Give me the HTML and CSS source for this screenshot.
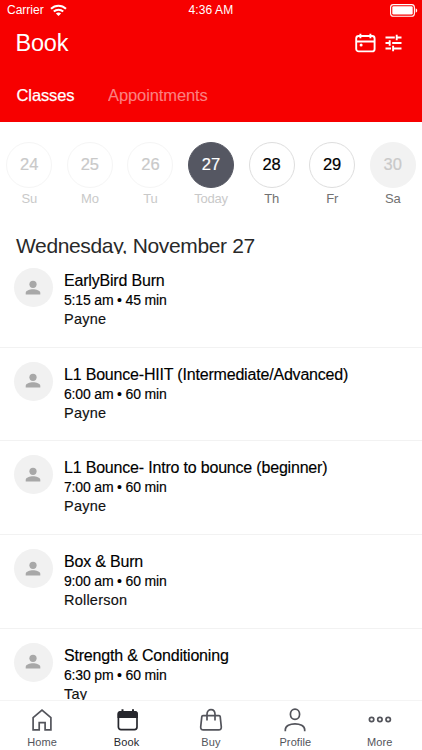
FILE: index.html
```
<!DOCTYPE html>
<html lang="en">
<head>
<meta charset="utf-8">
<meta name="viewport" content="width=device-width, initial-scale=1">
<title>Book</title>
<link rel="stylesheet" href="styles.css">
</head>
<body>
<svg class="symbols" aria-hidden="true">
  <symbol id="person" viewBox="0 0 16 16"><circle cx="8" cy="4.300" r="3.600"/><path d="M.7 14.600v-1.700C.7 10.500 4.800 9.300 8 9.300s7.300 1.200 7.300 3.600v1.700z"/></symbol>
</svg>
<div class="app">
  <header class="header">
    <div class="status">
      <span class="carrier">Carrier</span>
      <svg class="wifi" width="17" height="13" viewBox="0 0 17 13" fill="none" stroke="#fff" stroke-width="2"><path d="M1 4.700C5.200.6 11.800.6 16 4.700M3.800 7.500c2.700-2.500 6.700-2.500 9.400 0"/><path d="M8.500 12 5.900 9.500c1.500-1.300 3.700-1.300 5.200 0z" fill="#fff" stroke="none"/></svg>
      <span class="clock">4:36 AM</span>
      <svg class="battery" width="28" height="13" viewBox="0 0 28 13"><rect x=".6" y=".6" width="23.800" height="11.600" rx="2.800" fill="none" stroke="#fff" stroke-width="1.100"/><rect x="2.300" y="2.300" width="20.400" height="8.200" rx="1.200" fill="#fff"/><path d="M25.700 4.200c2 .8 2 3.700 0 4.500z" fill="#fff"/></svg>
    </div>
    <div class="titlebar">
      <h1 class="title">Book</h1>
      <svg class="cal" width="22" height="20" viewBox="0 0 22 20" fill="none" stroke="#fff" stroke-width="1.900"><rect x="1.200" y="3" width="18.400" height="15.400" rx="2.500"/><path d="M1.200 8.500h18.400M5.400.7v4.600M15.400.7v4.600"/><circle cx="6.100" cy="12" r="1.500" fill="#fff" stroke="none"/></svg>
      <svg class="tune" width="18" height="18" viewBox="0 0 18 18" fill="none" stroke="#fff" stroke-width="1.900"><path d="M.5 3.500h9.300M12 3.500h4.500M11.700.7v5.600M.5 9H5M7.200 9h9.300M4.700 6.200v5.600M.5 14.500H6M8.100 14.500h8.400M8.100 11.700v5.600"/></svg>
    </div>
    <nav class="tabs"><span class="tab-on">Classes</span><span class="tab-off">Appointments</span></nav>
  </header>
  <section class="days">
    <div class="day past"><span class="num">24</span><span class="name">Su</span></div>
    <div class="day past"><span class="num">25</span><span class="name">Mo</span></div>
    <div class="day past"><span class="num">26</span><span class="name">Tu</span></div>
    <div class="day today"><span class="num">27</span><span class="name">Today</span></div>
    <div class="day"><span class="num">28</span><span class="name">Th</span></div>
    <div class="day"><span class="num">29</span><span class="name">Fr</span></div>
    <div class="day closed"><span class="num">30</span><span class="name">Sa</span></div>
  </section>
  <h2 class="date">Wednesday, November 27</h2>
  <main class="list">
    <article class="row"><div class="avatar"><svg width="16" height="16"><use href="#person"/></svg></div><div class="info"><h3>EarlyBird Burn</h3><p class="time">5:15 am • 45 min</p><p class="who">Payne</p></div></article>
    <article class="row"><div class="avatar"><svg width="16" height="16"><use href="#person"/></svg></div><div class="info"><h3>L1 Bounce-HIIT (Intermediate/Advanced)</h3><p class="time">6:00 am • 60 min</p><p class="who">Payne</p></div></article>
    <article class="row"><div class="avatar"><svg width="16" height="16"><use href="#person"/></svg></div><div class="info"><h3>L1 Bounce- Intro to bounce (beginner)</h3><p class="time">7:00 am • 60 min</p><p class="who">Payne</p></div></article>
    <article class="row"><div class="avatar"><svg width="16" height="16"><use href="#person"/></svg></div><div class="info"><h3>Box &amp; Burn</h3><p class="time">9:00 am • 60 min</p><p class="who">Rollerson</p></div></article>
    <article class="row"><div class="avatar"><svg width="16" height="16"><use href="#person"/></svg></div><div class="info"><h3>Strength &amp; Conditioning</h3><p class="time">6:30 pm • 60 min</p><p class="who">Tay</p></div></article>
  </main>
  <nav class="bottom">
    <a class="item"><svg width="24" height="24" viewBox="0 0 24 24"><path d="M3.100 21.900V9.700L12 2l8.900 7.700v12.200h-5.800v-7.200H9.200v7.200z"/></svg><span>Home</span></a>
    <a class="item active"><svg width="24" height="24" viewBox="0 0 24 24"><rect x="3.400" y="4" width="18.600" height="17.600" rx="2.500"/><path class="solid" d="M2.500 10V5.500C2.500 4 3.500 3 5 3h1.500V1.300h2V3H17V1.300h2V3h1.400c1.500 0 2.500 1 2.500 2.500V10z"/></svg><span>Book</span></a>
    <a class="item"><svg width="24" height="24" viewBox="0 0 24 24"><path d="M4 7.700h16c.7 0 1.100.3 1.200 1l1.100 10.200c.2 1.800-.8 3-2.600 3H4.300c-1.800 0-2.800-1.200-2.600-3L2.800 8.700c.1-.7.500-1 1.200-1zM8 12.500V6.300c0-6.300 8-6.300 8 0v6.200"/></svg><span>Buy</span></a>
    <a class="item"><svg width="24" height="24" viewBox="0 0 24 24"><ellipse cx="12" cy="6.300" rx="4.600" ry="5.100"/><path d="M2.300 23.300v-1.500c0-8 19.400-8 19.400 0v1.500"/></svg><span>Profile</span></a>
    <a class="item"><svg width="24" height="24" viewBox="0 0 24 24"><circle cx="3.600" cy="11.500" r="2.200"/><circle cx="11.900" cy="11.500" r="2.200"/><circle cx="20.200" cy="11.500" r="2.200"/></svg><span>More</span></a>
  </nav>
</div>
</body>
</html>
```
FILE: styles.css
```
* { box-sizing: border-box; }
body, h1, h2, h3, p { margin: 0; font-weight: 400; }
body { font-family: "Liberation Sans", Arial, sans-serif; background: #fff; color: #111; overflow: hidden; }
.symbols { display: none; }
.app { height: 750px; display: flex; flex-direction: column; overflow: hidden; }
.header { height: 122px; flex: none; background: #f70000; color: #fff; }
.status { height: 20px; padding: 0 4px 0 7px; display: grid; grid-template-columns: 43px 138.500px 1fr auto; align-items: center; font-size: 12px; }
.clock { letter-spacing: .1px; }
.titlebar { height: 46px; padding: 0 19px 0 15.500px; display: flex; align-items: center; }
.title { flex: 1; font-size: 23.500px; letter-spacing: -.2px; }
.cal { margin-right: 8px; }
.tabs { height: 56px; padding: 19px 0 0 16.500px; display: flex; font-size: 16.500px; line-height: 20px; letter-spacing: -.1px; }
.tab-on { width: 91.500px; -webkit-text-stroke: .25px; }
.tab-off { opacity: .5; }
.days { height: 108px; flex: none; padding-top: 19.500px; margin: 0 -1px; display: grid; grid-template-columns: repeat(7, 1fr); }
.day { display: flex; flex-direction: column; align-items: center; }
.num { width: 46px; height: 46px; border: 1px solid #dedede; border-radius: 50%; line-height: 43px; text-align: center; font-size: 16.500px; color: #000; -webkit-text-stroke: .2px; }
.name { margin-top: 3.500px; font-size: 13px; letter-spacing: -.2px; line-height: 16px; color: #717171; }
.past .num { color: #c9c9c9; border-color: #f5f5f5; }
.past .name, .today .name { color: #c9c9c9; }
.today .num { background: #555762; border-color: #555762; color: #fff; }
.closed .num { background: #f2f2f2; border-color: #f2f2f2; color: #c9c9c9; }
.date { height: 24px; flex: none; padding-left: 16px; font-size: 21px; letter-spacing: -.36px; line-height: 32px; color: #292929; overflow: hidden; }
.list { flex: 1; min-height: 0; overflow: hidden; }
.row { height: 93.700px; padding: 14px 0 0 13.700px; display: flex; gap: 11.300px; border-bottom: 1px solid #f2f2f2; }
.avatar { width: 39px; height: 39px; border-radius: 50%; background: #f1f1f1; display: flex; align-items: center; justify-content: center; fill: #a8a8a8; }
.info { padding-top: 2px; -webkit-text-stroke: .15px; }
h3 { font-size: 16px; letter-spacing: -.19px; line-height: 21px; color: #000; white-space: nowrap; }
.time { font-size: 14px; letter-spacing: -.17px; line-height: 19px; color: #000; }
.who { font-size: 14.500px; line-height: 18px; letter-spacing: .22px; }
.bottom { height: 50.500px; flex: none; border-top: 1px solid #f4f4f4; background: #fff; display: grid; grid-template-columns: repeat(5, 1fr); }
.item { display: flex; flex-direction: column; align-items: center; padding-top: 7px; font-size: 11px; line-height: 13px; color: #53545b; letter-spacing: .1px; }
.item svg { fill: none; stroke: #53545b; stroke-width: 1.700; margin-bottom: 4.500px; }
.item.active { color: #26272d; }
.item.active svg { stroke: #26272d; }
.item .solid { fill: #26272d; stroke: none; }
```
